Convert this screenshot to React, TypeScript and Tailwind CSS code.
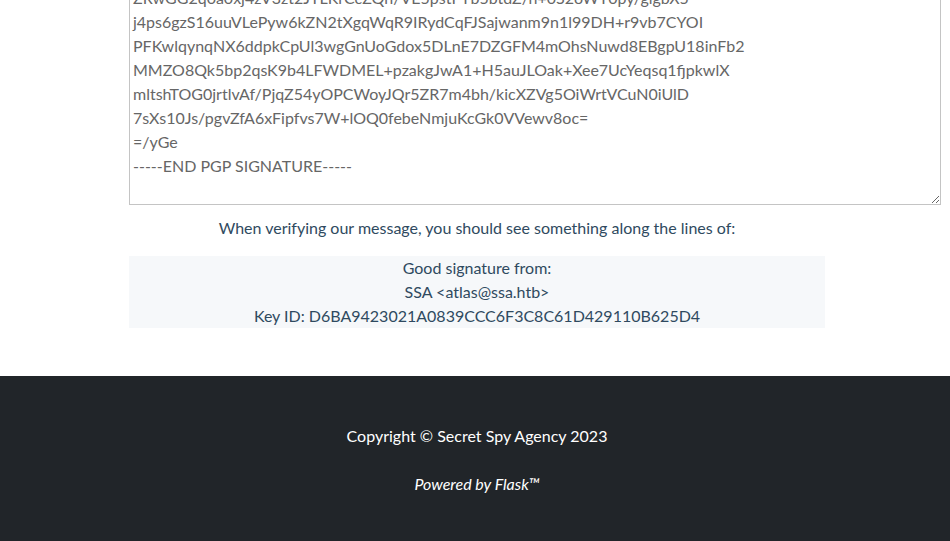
import React from 'react'

const signatureLines = [
  'ZRwGG2q0a0xj4zV3zt2JTLKrCcZQh/VE5pstFYb5btdZ/n+0S2oWT0py/glgbX5',
  'j4ps6gzS16uuVLePyw6kZN2tXgqWqR9IRydCqFJSajwanm9n1l99DH+r9vb7CYOI',
  'PFKwlqynqNX6ddpkCpUl3wgGnUoGdox5DLnE7DZGFM4mOhsNuwd8EBgpU18inFb2',
  'MMZO8Qk5bp2qsK9b4LFWDMEL+pzakgJwA1+H5auJLOak+Xee7UcYeqsq1fjpkwlX',
  'mltshTOG0jrtlvAf/PjqZ54yOPCWoyJQr5ZR7m4bh/kicXZVg5OiWrtVCuN0iUlD',
  '7sXs10Js/pgvZfA6xFipfvs7W+lOQ0febeNmjuKcGk0VVewv8oc=',
  '=/yGe',
  '-----END PGP SIGNATURE-----',
  '',
]

export default function App() {
  return (
    <div className="min-h-[541px] bg-white text-[#2f4a60] [font-family:Lato,'Open_Sans',sans-serif] text-[16px] leading-6 overflow-hidden">
      {/* Main */}
      <main className="ml-[129px] w-[696px] flex flex-col items-stretch">
        <textarea
          readOnly
          value={signatureLines.join('\n')}
          className="-mt-[17px] w-[812px] h-[222px] border border-[#c4c4c4] px-[3px] py-[2px] text-[#666666] leading-6 outline-none whitespace-pre overflow-hidden [font-family:inherit] text-[16px]"
        />
        <p className="mt-[11px] mb-4 text-center">
          When verifying our message, you should see something along the lines of:
        </p>
        <div className="bg-[#f6f8fa] text-center">
          <div>Good signature from:</div>
          <div>SSA &lt;atlas@ssa.htb&gt;</div>
          <div>Key ID: D6BA9423021A0839CCC6F3C8C61D429110B625D4</div>
        </div>
      </main>

      {/* Footer */}
      <footer className="mt-12 bg-[#212529] text-white text-center pt-12 pb-12 pl-[4px]">
        <p>Copyright © Secret Spy Agency 2023</p>
        <p className="mt-6 italic">Powered by Flask™</p>
      </footer>
    </div>
  )
}
